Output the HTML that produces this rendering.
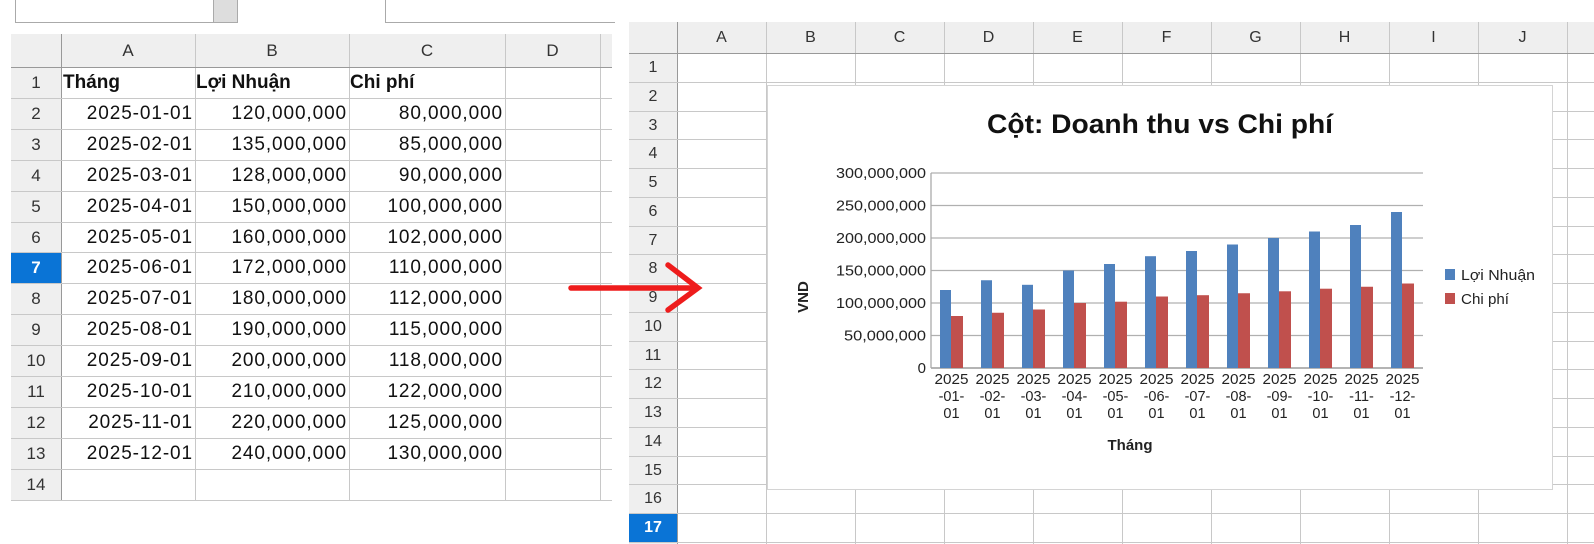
<!DOCTYPE html>
<html><head><meta charset="utf-8"><style>
*{margin:0;padding:0;box-sizing:border-box}
body{width:1594px;height:544px;background:#fff;position:relative;overflow:hidden;font-family:"Liberation Sans",sans-serif;color:#111}
.a{position:absolute}
.hd{background:#efefef;color:#333;text-align:center}
.vl{position:absolute;width:1px;background:#c8c8c8}
.hl{position:absolute;height:1px;background:#c8c8c8}
.cell{position:absolute;font-size:19px;letter-spacing:0.9px;line-height:31px;white-space:nowrap}
</style></head><body>
<!-- top strip boxes -->
<div class="a" style="left:15px;top:0;width:223px;height:23px;border:1px solid #aaa;border-top:none"></div>
<div class="a" style="left:213px;top:0;width:25px;height:23px;background:#ddd;border:1px solid #aaa;border-top:none"></div>
<div class="a" style="left:385px;top:0;width:230px;height:23px;border-left:1px solid #aaa;border-bottom:1px solid #aaa"></div>

<!-- LEFT SHEET -->
<div class="a hd" style="left:11px;top:34px;width:601px;height:33px"></div>
<div class="a hd" style="left:11px;top:34px;width:50px;height:466px"></div>
<div id="L"></div>

<!-- RIGHT SHEET -->
<div class="a" style="left:615px;top:14px;width:14px;height:530px;background:#fff"></div>
<div class="a hd" style="left:629px;top:22px;width:965px;height:31px"></div>
<div class="a hd" style="left:629px;top:22px;width:48px;height:522px"></div>
<div id="R"></div>

<!-- chart -->
<div class="a" style="left:767px;top:85px;width:786px;height:405px;background:#fff;border:1px solid #d4d4d4"></div>
<svg class="a" style="left:0;top:0" width="1594" height="544" font-family="Liberation Sans, sans-serif">
<text x="1160" y="133" font-size="27" font-weight="bold" text-anchor="middle" textLength="346" lengthAdjust="spacingAndGlyphs" fill="#111">Cột: Doanh thu vs Chi phí</text>
<g id="grid"></g>
<text transform="translate(808,297) rotate(-90)" font-size="15" font-weight="bold" text-anchor="middle" fill="#222">VND</text>
<text x="1130" y="450" font-size="15" font-weight="bold" text-anchor="middle" fill="#222">Tháng</text>
<rect x="1445" y="269" width="10" height="11" fill="#4f81bd"/>
<rect x="1445" y="293" width="10" height="11" fill="#c0504d"/>
<text x="1461" y="280" font-size="15" textLength="74" lengthAdjust="spacingAndGlyphs" fill="#222">Lợi Nhuận</text>
<text x="1461" y="304" font-size="15" textLength="48" lengthAdjust="spacingAndGlyphs" fill="#222">Chi phí</text>
<!-- arrow -->
<g stroke="#ee1c1c" stroke-width="5.5" stroke-linecap="round" fill="none">
<line x1="571" y1="288" x2="697" y2="288"/>
<polyline points="668,265 698,288 668,310"/>
</g>
</svg>
<script>
var L=document.getElementById('L'),h='';
var cols=[61,195,349,505,600];
var rt=67,rh=30.9;
for(var i=0;i<cols.length;i++)h+='<div class="vl" style="left:'+cols[i]+'px;top:34px;height:466px;'+(i==0?'background:#999':'')+'"></div>';
h+='<div class="hl" style="left:11px;top:67px;width:601px;background:#999"></div>';
for(var r=1;r<=14;r++){var y=Math.round(rt+rh*r);h+='<div class="hl" style="left:11px;top:'+y+'px;width:601px"></div>';}
var nm=['A','B','C','D'];
for(var i=0;i<4;i++)h+='<div class="a" style="left:'+cols[i]+'px;top:34px;width:'+(cols[i+1]-cols[i])+'px;line-height:33px;text-align:center;font-size:17px;color:#333">'+nm[i]+'</div>';
var P=[120,135,128,150,160,172,180,190,200,210,220,240],C=[80,85,90,100,102,110,112,115,118,122,125,130];
function f(n){return n+',000,000'}
for(var r=1;r<=14;r++){var y=Math.round(rt+rh*(r-1));
 var sel=r==7;
 h+='<div class="a" style="left:11px;top:'+(y+1)+'px;width:50px;height:30px;line-height:30px;text-align:center;font-size:17px;'+(sel?'background:#0a74d6;color:#fff;font-weight:bold':'color:#333')+'">'+r+'</div>';
 if(r==1){h+='<div class="cell" style="left:63px;top:'+y+'px;font-weight:bold;letter-spacing:0">Tháng</div><div class="cell" style="left:196px;top:'+y+'px;font-weight:bold;letter-spacing:0">Lợi Nhuận</div><div class="cell" style="left:350px;top:'+y+'px;font-weight:bold;letter-spacing:0">Chi phí</div>';}
 else if(r<=13){var m=r-1;var d='2025-'+(m<10?'0'+m:m)+'-01';
 h+='<div class="cell" style="right:'+(1594-193)+'px;top:'+y+'px">'+d+'</div>';
 h+='<div class="cell" style="right:'+(1594-347)+'px;top:'+y+'px">'+f(P[m-1])+'</div>';
 h+='<div class="cell" style="right:'+(1594-503)+'px;top:'+y+'px">'+f(C[m-1])+'</div>';}
}
L.innerHTML=h;
// right
var R=document.getElementById('R');h='';
for(var k=0;k<=10;k++){var x=677+89*k;h+='<div class="vl" style="left:'+x+'px;top:22px;height:522px;'+(k==0?'background:#999':'')+'"></div>';
 if(k<10)h+='<div class="a" style="left:'+x+'px;top:22px;width:89px;line-height:31px;text-align:center;font-size:16px;color:#333">'+'ABCDEFGHIJ'[k]+'</div>';}
h+='<div class="hl" style="left:629px;top:53px;width:965px;background:#999"></div>';
for(var r=1;r<=17;r++){var y=Math.round(53+28.75*(r-1));
 h+='<div class="hl" style="left:629px;top:'+Math.round(53+28.75*r)+'px;width:965px"></div>';
 var sel=r==17;
 h+='<div class="a" style="left:629px;top:'+(y+1)+'px;width:48px;height:28px;line-height:28px;text-align:center;font-size:16px;'+(sel?'background:#0a74d6;color:#fff;font-weight:bold':'color:#333')+'">'+r+'</div>';}
R.innerHTML=h;
// chart grid
var g='',ns='';
for(var i=0;i<=6;i++){var y=368-32.5*i;
 g+='<line x1="931" x2="1423" y1="'+y+'" y2="'+y+'" stroke="'+(i==0?'#888':'#b0b0b0')+'" stroke-width="1.3"/>';
 var lab=i==0?'0':(i*50)+',000,000';
 g+='<text x="926" y="'+(y+5)+'" font-size="15" text-anchor="end" fill="#222"'+(i>0?' textLength="'+(i==1?82:90)+'" lengthAdjust="spacingAndGlyphs"':'')+'>'+lab+'</text>';}
g+='<line x1="931" x2="931" y1="173" y2="368" stroke="#aaa" stroke-width="1.3"/>';
for(var m=0;m<12;m++){var x0=931+41*m;
 g+='<rect x="'+(x0+9)+'" y="'+(368-P[m]*0.65)+'" width="11" height="'+(P[m]*0.65)+'" fill="#4f81bd"/>';
 g+='<rect x="'+(x0+20)+'" y="'+(368-C[m]*0.65)+'" width="12" height="'+(C[m]*0.65)+'" fill="#c0504d"/>';
 var cx=x0+20.5,mm=m+1;mm=mm<10?'0'+mm:mm;
 g+='<text x="'+cx+'" y="384" font-size="14.5" text-anchor="middle" fill="#222" textLength="34" lengthAdjust="spacingAndGlyphs">2025</text>';
 g+='<text x="'+cx+'" y="401" font-size="14.5" text-anchor="middle" fill="#222">-'+mm+'-</text>';
 g+='<text x="'+cx+'" y="418" font-size="14.5" text-anchor="middle" fill="#222">01</text>';}
document.getElementById('grid').innerHTML=g;
</script>
</body></html>
